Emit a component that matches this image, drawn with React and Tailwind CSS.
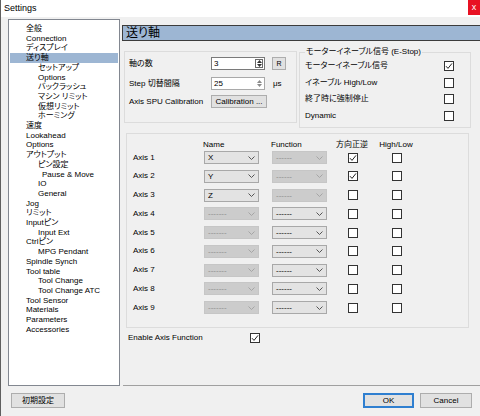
import React from "react";

const treeItems = [
  ["全般", 0], ["Connection", 0], ["ディスプレイ", 0], ["送り軸", 0],
  ["セットアップ", 1], ["Options", 1], ["バックラッシュ", 1], ["マシン リミット", 1],
  ["仮想リミット", 1], ["ホーミング", 1],
  ["速度", 0], ["Lookahead", 0], ["Options", 0], ["アウトプット", 0],
  ["ピン設定", 1], ["Pause & Move", 2], ["IO", 1], ["General", 1],
  ["Jog", 0], ["リミット", 0], ["Inputピン", 0], ["Input Ext", 1],
  ["Ctrlピン", 0], ["MPG Pendant", 1], ["Spindle Synch", 0], ["Tool table", 0],
  ["Tool Change", 1], ["Tool Change ATC", 1], ["Tool Sensor", 0],
  ["Materials", 0], ["Parameters", 0], ["Accessories", 0],
];

const indents = ["pl-[16px]", "pl-[28px]", "pl-[32px]"];

const axes = [
  { name: "X", nameOn: true, fnOn: false, dir: true },
  { name: "Y", nameOn: true, fnOn: false, dir: true },
  { name: "Z", nameOn: true, fnOn: false, dir: false },
  { name: "-------", nameOn: false, fnOn: true, dir: false },
  { name: "-------", nameOn: false, fnOn: true, dir: false },
  { name: "-------", nameOn: false, fnOn: true, dir: false },
  { name: "-------", nameOn: false, fnOn: true, dir: false },
  { name: "-------", nameOn: false, fnOn: true, dir: false },
  { name: "-------", nameOn: false, fnOn: true, dir: false },
];

function Check({ checked }) {
  return (
    <div className="flex h-[10px] w-[10px] items-center justify-center border border-[#333333] bg-white">
      {checked && (
        <svg width="8" height="8" viewBox="0 0 8 8">
          <polyline points="1,4.2 3,6.4 7,1.4" fill="none" stroke="#222" strokeWidth="1" />
        </svg>
      )}
    </div>
  );
}

function Combo({ value, enabled }) {
  return (
    <div
      className={
        enabled
          ? "flex h-[13px] w-[55px] items-center border border-[#a8a8a8] bg-[#e3e3e3] pl-[3px] pr-[3px] text-black"
          : "flex h-[13px] w-[55px] items-center border border-[#c6c6c6] bg-[#cccccc] pl-[3px] pr-[3px] text-[#8c8c8c]"
      }
    >
      <span className="flex-1 leading-[11px]">{value}</span>
      <svg width="7" height="4" viewBox="0 0 7 4">
        <polyline
          points="0.5,0.5 3.5,3.5 6.5,0.5"
          fill="none"
          stroke={enabled ? "#555" : "#a5a5a5"}
          strokeWidth="1"
        />
      </svg>
    </div>
  );
}

function Spin({ value, active }) {
  return (
    <div
      className={
        "flex h-[13px] w-[54px] items-stretch border bg-white " +
        (active ? "border-[#7a7a7a]" : "border-[#a9a9a9]")
      }
    >
      <span className="flex-1 pl-[2px] leading-[11px]">{value}</span>
      <div
        className={
          "my-[1px] mr-[1px] flex w-[8px] flex-col items-center justify-center gap-[1px] " +
          (active ? "border border-[#6a6a6a]" : "")
        }
      >
        <svg width="5" height="3" viewBox="0 0 5 3">
          <polygon points="0,3 2.5,0 5,3" fill={active ? "#333" : "#8a8a8a"} />
        </svg>
        <svg width="5" height="3" viewBox="0 0 5 3">
          <polygon points="0,0 2.5,3 5,0" fill={active ? "#333" : "#8a8a8a"} />
        </svg>
      </div>
    </div>
  );
}

function Button({ children, className }) {
  return (
    <div
      className={
        "flex items-center justify-center border border-[#adadad] bg-[#e1e1e1] leading-none " +
        (className || "")
      }
    >
      {children}
    </div>
  );
}

export default function App() {
  return (
    <div className="relative h-[416px] w-[480px] overflow-hidden border-l border-[#5f5f5f] bg-[#f0f0f0] font-['Liberation_Sans','Noto_Sans_CJK_JP',sans-serif] text-[8px] text-black [font-feature-settings:'palt']">
      {/* title bar */}
      <div className="flex h-[17px] items-start bg-white">
        <span className="flex-1 pl-[3px] pt-[3px] text-[9px] leading-[10px]">Settings</span>
        <div className="flex h-[15px] w-[12px] items-center justify-center bg-[#e81123] text-[9px] leading-none text-white">
          x
        </div>
      </div>

      <div className="flex">
        {/* left column: tree */}
        <div className="ml-[7px] flex w-[112px] flex-col">
          <div className="mt-[2px] h-[367px] border border-[#828790] bg-white pt-[4px]">
            {treeItems.map(([label, lvl], i) => (
              <div
                key={i}
                className={
                  "mx-[1px] h-[9.71px] whitespace-nowrap leading-[9.71px] " +
                  indents[lvl] +
                  (i === 3 ? " bg-[#9db6d3]" : "")
                }
              >
                {label}
              </div>
            ))}
          </div>
          <Button className="ml-[3px] mt-[7px] h-[15px] w-[54px]">初期設定</Button>
        </div>

        {/* right column */}
        <div className="flex w-[360px] flex-col">
          <div className="-mr-[3px] ml-[2px] mt-[8px] flex h-[16px] items-center border border-[#3c3c3c] bg-[#9db6d3] pl-[3px] text-[12px] leading-none">
            送り軸
          </div>

          <div className="ml-[4px] mt-[10px] flex items-start">
            {/* left group */}
            <div className="h-[72px] w-[173px] border border-[#dcdcdc] pl-[4px]">
              <div className="mt-[5px] flex h-[13px] items-center">
                <span className="w-[82px]">軸の数</span>
                <Spin value="3" active />
                <Button className="ml-[7px] h-[13px] w-[14px] text-[7px]">R</Button>
              </div>
              <div className="mt-[7px] flex h-[13px] items-center">
                <span className="w-[82px]">Step 切替間隔</span>
                <Spin value="25" />
                <span className="ml-[8px]">μs</span>
              </div>
              <div className="mt-[5px] flex h-[13px] items-center">
                <span className="w-[82px] whitespace-nowrap">Axis SPU Calibration</span>
                <Button className="h-[13px] w-[56px]">Calibration ...</Button>
              </div>
            </div>

            {/* right group */}
            <div className="relative ml-[2px] mt-[1px] h-[76px] w-[172px] border border-[#dcdcdc] pl-[5px] pt-[5px]">
              <span className="absolute -top-[6px] left-[5px] bg-[#f0f0f0] px-[1px] leading-[10px]">
                モーターイネーブル信号 (E-Stop)
              </span>
              {[
                ["モーターイネーブル信号", true],
                ["イネーブル High/Low", false],
                ["終了時に強制停止", false],
                ["Dynamic", false],
              ].map(([label, on]) => (
                <div key={label} className="flex h-[16.5px] items-center">
                  <span className="flex-1">{label}</span>
                  <div className="mr-[16px]">
                    <Check checked={on} />
                  </div>
                </div>
              ))}
            </div>
          </div>

          {/* axis table */}
          <div className="ml-[6px] mt-[5px] h-[195px] w-[343px] border border-[#dcdcdc] pt-[6px]">
            <div className="flex h-[10px] items-center leading-[10px]">
              <span className="w-[76px]" />
              <span className="w-[55px]">Name</span>
              <span className="ml-[13px] w-[55px]">Function</span>
              <span className="ml-[6px] w-[40px] text-center">方向正逆</span>
              <span className="ml-[4px] w-[40px] text-center">High/Low</span>
            </div>
            <div className="mt-[1px] flex flex-col gap-[5.75px]">
              {axes.map((a, i) => (
                <div key={i} className="flex h-[13px] items-center">
                  <span className="w-[77px] pl-[6px]">Axis {i + 1}</span>
                  <Combo value={a.name} enabled={a.nameOn} />
                  <div className="ml-[13px]">
                    <Combo value="------" enabled={a.fnOn} />
                  </div>
                  <div className="ml-[6px] flex w-[40px] justify-center">
                    <Check checked={a.dir} />
                  </div>
                  <div className="ml-[4px] flex w-[40px] justify-center">
                    <Check checked={false} />
                  </div>
                </div>
              ))}
            </div>
          </div>

          <div className="ml-[8px] mt-[5px] flex h-[10px] items-center">
            <span className="w-[122px]">Enable Axis Function</span>
            <Check checked />
          </div>

          <div className="ml-[3px] mt-[42px] border-t border-[#a0a0a0]" />

          <div className="mt-[7px] flex justify-end gap-[6px] pr-[8px]">
            <div className="flex h-[15px] w-[51px] items-center justify-center border-[2px] border-[#2f7fd0] bg-[#e1e1e1] leading-none">
              OK
            </div>
            <Button className="h-[15px] w-[52px]">Cancel</Button>
          </div>
        </div>
      </div>
    </div>
  );
}
